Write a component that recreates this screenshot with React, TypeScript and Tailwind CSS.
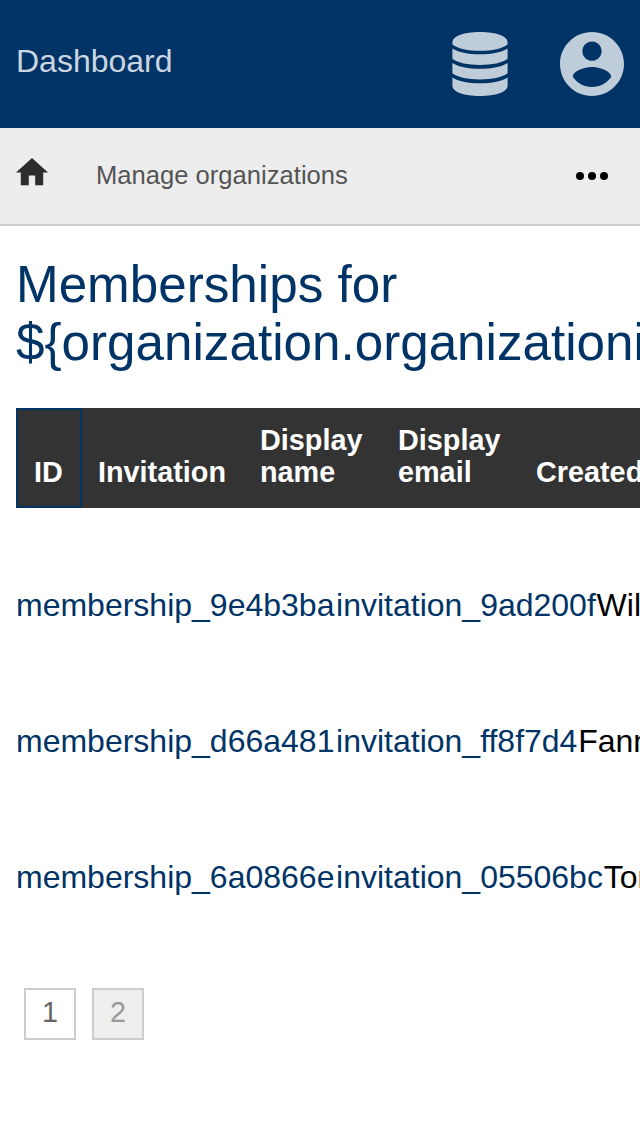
import React from "react";

const memberships = [
  { id: "membership_9e4b3ba", invitation: "invitation_9ad200f", name: "Will" },
  { id: "membership_d66a481", invitation: "invitation_ff8f7d4", name: "Fanny" },
  { id: "membership_6a0866e", invitation: "invitation_05506bc", name: "Tom" },
];

const title = "Memberships for ${organization.organizationid}";

function DatabaseIcon() {
  return (
    <svg viewBox="0 0 56 64" className="h-16 w-14" fill="currentColor">
      <path d="M0.4 10.5C0.4 4 12 0 28 0S55.6 4 55.6 10.5V12.4C50 16.8 40 18.7 28 18.7S6 16.8 0.4 12.4Z" />
      <path d="M0.4 16.4C6 20 16 22.3 28 22.3S50 20 55.6 16.4V26.8C50 31 40 33 28 33S6 31 0.4 26.8Z" />
      <path d="M0.4 30.9C6 34.5 16 36.8 28 36.8S50 34.5 55.6 30.9V41.2C50 45.4 40 47.4 28 47.4S6 45.4 0.4 41.2Z" />
      <path d="M0.4 45.4C6 49 16 51.2 28 51.2S50 49 55.6 45.4V53.5C55.6 60 44 64 28 64S0.4 60 0.4 53.5Z" />
    </svg>
  );
}

function AccountIcon() {
  return (
    <svg viewBox="2 2 20 20" className="size-16" fill="currentColor">
      <path d="M12 2C6.48 2 2 6.48 2 12s4.48 10 10 10 10-4.48 10-10S17.52 2 12 2zm0 3c1.66 0 3 1.34 3 3s-1.34 3-3 3-3-1.34-3-3 1.34-3 3-3zm0 14.2c-2.5 0-4.71-1.28-6-3.22.03-1.99 4-3.08 6-3.08 1.99 0 5.97 1.09 6 3.08-1.29 1.94-3.5 3.22-6 3.22z" />
    </svg>
  );
}

export default function App() {
  return (
    <div className="h-[1136px] w-full overflow-hidden bg-white font-['Liberation_Sans',Arial,sans-serif] text-[32px] text-black">
      <header className="flex h-32 items-center bg-[#003366] px-4 text-[#bfccd9]">
        <span className="flex-1 pb-1.5 leading-9 text-[#ccd6e0]">Dashboard</span>
        <DatabaseIcon />
        <span className="ml-[52px]">
          <AccountIcon />
        </span>
      </header>

      <nav className="flex h-[98px] items-center border-b-2 border-[#cccccc] bg-[#ededed] pr-8 pl-4">
        <svg viewBox="2 3 20 17" className="mb-2 h-[27.2px] w-8" fill="#2d2d2d">
          <path d="M10 20v-6h4v6h5v-8h3L12 3 2 12h3v8z" />
        </svg>
        <span className="ml-12 flex-1 pb-0.5 text-[25.6px] leading-[30px] text-[#555555]">Manage organizations</span>
        <svg viewBox="0 0 32 8" className="h-2 w-8" fill="#000">
          <circle cx="4" cy="4" r="4" />
          <circle cx="16" cy="4" r="4" />
          <circle cx="28" cy="4" r="4" />
        </svg>
      </nav>

      <main className="px-4 pt-[30px]">
        <h1 className="text-[51.2px] leading-[58px] text-[#003366]">{title}</h1>

        <div className="mt-9 flex h-[100px] w-[700px] items-end bg-[#333333] text-[28.8px] leading-8 font-bold text-white">
          <div className="flex h-full w-[66px] shrink-0 items-end border-2 border-[#003366] pb-[18px] pl-4">ID</div>
          <div className="w-[162px] shrink-0 pb-5 pl-4">Invitation</div>
          <div className="w-[138px] shrink-0 pb-5 pl-4">Display name</div>
          <div className="w-[138px] shrink-0 pb-5 pl-4">Display email</div>
          <div className="shrink-0 pb-5 pl-4">Created</div>
        </div>

        <div className="pt-[29px]">
          {memberships.map((m) => (
            <div key={m.id} className="flex h-[136px] items-center whitespace-nowrap">
              <a className="mr-[1.6px] text-[#003366]">{m.id}</a>
              <a className="mr-[0.8px] text-[#003366]">{m.invitation}</a>
              <span>{m.name}</span>
            </div>
          ))}
        </div>

        <div className="mt-[43px] flex gap-4 pl-2 text-[28.8px] leading-8">
          <span className="flex size-[52px] justify-center border-2 border-[#cccccc] pt-1.5 text-[#666666]">1</span>
          <span className="flex size-[52px] justify-center border-2 border-[#cccccc] bg-[#eeeeee] pt-1.5 text-[#999999]">2</span>
        </div>
      </main>
    </div>
  );
}
